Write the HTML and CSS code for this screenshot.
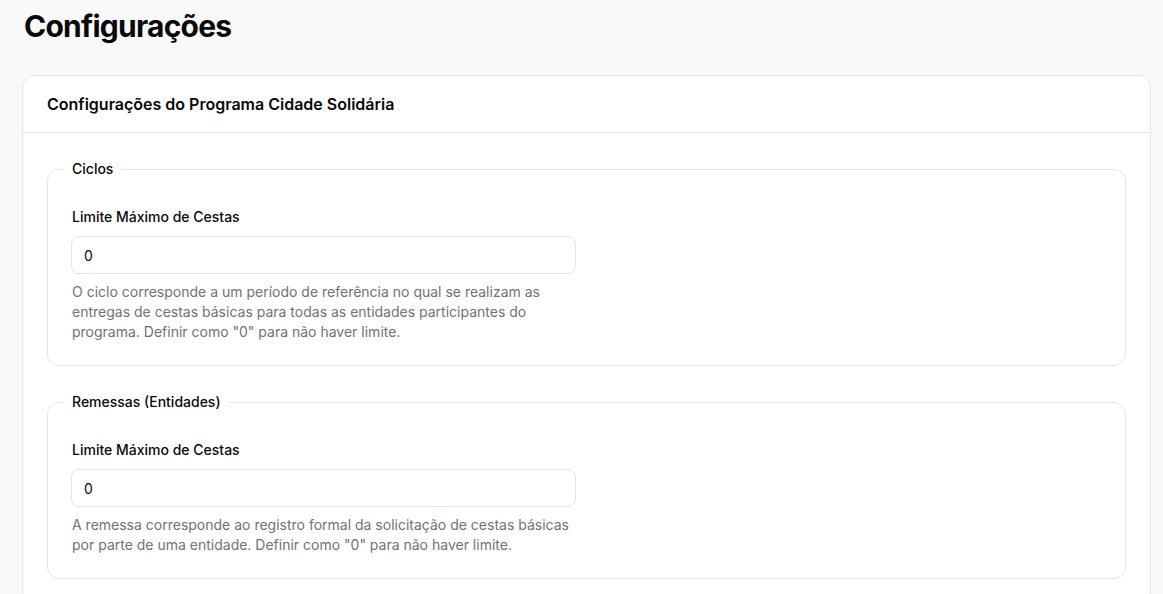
FILE: index.html
```html
<!DOCTYPE html>
<html lang="pt-BR">
<head>
<meta charset="utf-8">
<title>Configurações</title>
<link rel="stylesheet" href="styles.css">
</head>
<body>
<main class="page">
  <h1 class="page-title">Configurações</h1>
  <section class="card">
    <header class="card-header">
      <h2 class="card-title">Configurações do Programa Cidade Solidária</h2>
    </header>
    <div class="card-body">
      <fieldset class="group">
        <legend class="group-legend">Ciclos</legend>
        <div class="grid">
          <div class="field">
            <label class="field-label" for="ciclos">Limite Máximo de Cestas</label>
            <input class="field-input" id="ciclos" type="text" value="0">
            <p class="field-help">O ciclo corresponde a um período de referência no qual se realizam as entregas de cestas básicas para todas as entidades participantes do programa. Definir como "0" para não haver limite.</p>
          </div>
        </div>
      </fieldset>
      <fieldset class="group">
        <legend class="group-legend">Remessas (Entidades)</legend>
        <div class="grid">
          <div class="field">
            <label class="field-label" for="remessas">Limite Máximo de Cestas</label>
            <input class="field-input" id="remessas" type="text" value="0">
            <p class="field-help">A remessa corresponde ao registro formal da solicitação de cestas básicas por parte de uma entidade. Definir como "0" para não haver limite.</p>
          </div>
        </div>
      </fieldset>
    </div>
  </section>
</main>
</body>
</html>
```

FILE: styles.css
```css
* { box-sizing: border-box; }
html, body { margin: 0; padding: 0; }
body {
  background: #f9f9f9;
  font-family: Inter, "Noto Sans", sans-serif;
  color: #09090b;
  overflow: hidden;
}
.page {
  padding: 8px 12px 0 22px;
}
.page-title {
  margin: 0 0 31px 2px;
  font-size: 30px;
  line-height: 36px;
  font-weight: 700;
  letter-spacing: -0.75px;
}
.card {
  background: #fff;
  border: 1px solid #e6e6e8;
  border-radius: 12px;
}
.card-header {
  padding: 16px 24px;
  border-bottom: 1px solid #e6e6e8;
}
.card-title {
  margin: 0;
  font-size: 16px;
  line-height: 24px;
  font-weight: 600;
}
.card-body {
  padding: 26px 24px 24px;
  display: flex;
  flex-direction: column;
  gap: 26px;
}
.group {
  margin: 0;
  border: 1px solid #e6e6e8;
  border-radius: 12px;
  padding: 4px 24px 23px;
  min-width: 0;
}
.group-legend {
  padding: 0 8px;
  margin-left: -8px;
  font-size: 14px;
  line-height: 20px;
  font-weight: 500;
}
.grid {
  display: grid;
  grid-template-columns: 1fr 1fr;
  gap: 20px;
}
.field {
  display: flex;
  flex-direction: column;
  padding-top: 24px;
}
.field-label {
  font-size: 14px;
  line-height: 20px;
  font-weight: 500;
  margin-bottom: 9px;
}
.field-input {
  height: 38px;
  margin: 0 1px 0 -1px;
  border: 1px solid #e4e4e7;
  border-radius: 8px;
  padding: 0 12px;
  font-family: inherit;
  font-size: 14px;
  color: #09090b;
  background: #fff;
  outline: none;
}
.field-help {
  margin: 8px 0 0;
  font-size: 14px;
  line-height: 20px;
  color: #71717a;
}
```
